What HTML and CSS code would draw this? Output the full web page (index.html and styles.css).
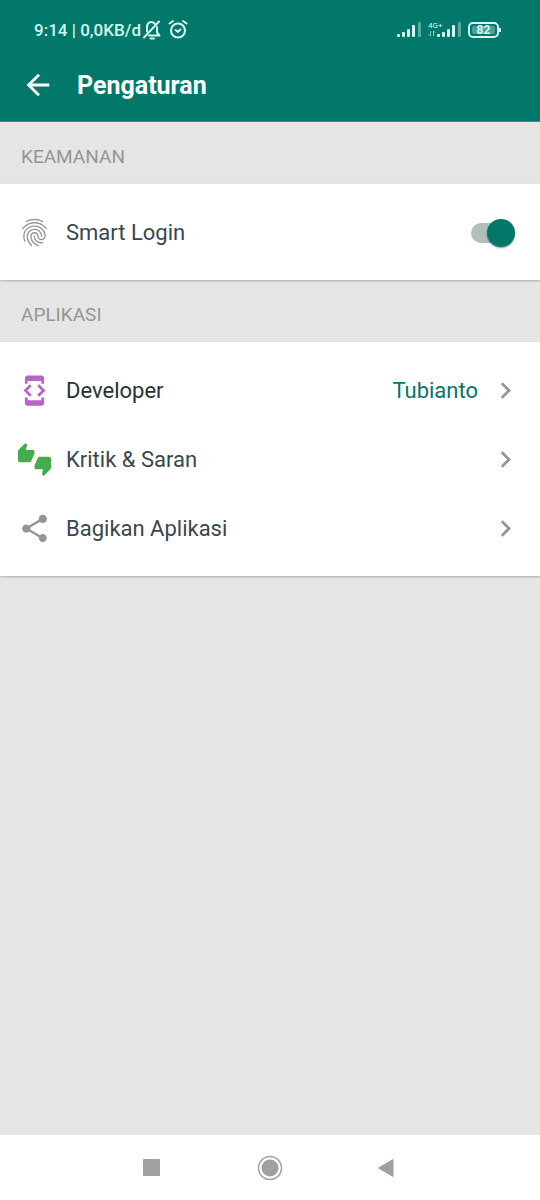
FILE: index.html
```html
<!DOCTYPE html>
<html lang="id">
<head>
<meta charset="utf-8">
<meta name="viewport" content="width=device-width, initial-scale=1">
<title>Pengaturan</title>
<link rel="stylesheet" href="styles.css">
</head>
<body>
<header class="top">
  <div class="status">
    <span class="status-text">9:14 | 0,0KB/d</span>
    <svg class="bell" viewBox="0 0 20 22" width="20" height="22" fill="none" stroke="currentColor" stroke-width="2" stroke-linecap="round" stroke-linejoin="round" aria-hidden="true">
      <path d="M2 18.500L17 2.500M12.500 4.500C11.500 3.300 10.500 3 9.500 3 6.500 3 5 5.500 5 8.500V12.500M15 8V13.500L17.500 16.500H7"/><path d="M8.500 19.500H12"/>
    </svg>
    <svg class="alarm" viewBox="0 0 20 22" width="20" height="22" fill="none" stroke="currentColor" stroke-width="2.100" stroke-linecap="round" stroke-linejoin="round" aria-hidden="true">
      <circle cx="10" cy="11.500" r="7"/><path d="M7.500 11L10 12.800 12.500 10.500M1.500 4.500L5 2M18.500 4.500L15 2"/>
    </svg>
    <span class="status-right">
      <svg class="signal" viewBox="0 0 24 16" width="24" height="16" fill="currentColor" aria-hidden="true">
        <rect x="0" y="12" width="3" height="3" rx="1"/><rect x="5" y="10" width="3" height="5" rx="1"/><rect x="10" y="7" width="3" height="8" rx="1"/><rect x="15" y="3" width="3" height="12" rx="1"/><rect x="21" y="0" width="3" height="15" rx="1" opacity=".4"/>
      </svg>
      <span class="net">
        <span class="net-label">4G+</span>
        <svg viewBox="0 0 8 7" width="8" height="7" fill="none" stroke="currentColor" opacity=".6" aria-hidden="true"><path d="M2.500 1V6L.5 4M5.500 6V1L7.500 3"/></svg>
      </span>
      <svg class="signal" viewBox="0 0 24 16" width="24" height="16" fill="currentColor" aria-hidden="true">
        <rect x="0" y="12" width="3" height="3" rx="1"/><rect x="5" y="10" width="3" height="5" rx="1"/><rect x="10" y="7" width="3" height="8" rx="1"/><rect x="15" y="3" width="3" height="12" rx="1"/><rect x="21" y="0" width="3" height="15" rx="1" opacity=".4"/>
      </svg>
      <span class="battery"><span class="battery-level">82</span></span>
    </span>
  </div>
  <div class="appbar">
    <button class="back" type="button" aria-label="Kembali">
      <svg viewBox="0 0 24 24" width="34" height="34" fill="currentColor" aria-hidden="true"><path d="M20 11H7.830l5.590-5.590L12 4l-8 8 8 8 1.410-1.410L7.830 13H20v-2z"/></svg>
    </button>
    <h1 class="title">Pengaturan</h1>
  </div>
</header>
<main class="content">
  <h2 class="section">KEAMANAN</h2>
  <div class="card">
    <label class="row" for="smart">
      <svg class="icon gray" viewBox="0 0 24 24" aria-hidden="true"><path d="M17.81 4.47c-.08 0-.16-.02-.23-.06C15.66 3.42 14 3 12.01 3c-1.98 0-3.86.47-5.57 1.41-.24.13-.54.04-.68-.2-.13-.24-.04-.55.2-.68C7.82 2.52 9.86 2 12.01 2c2.13 0 3.99.47 6.03 1.52.25.13.34.43.21.67-.09.18-.26.28-.44.28zM3.5 9.72c-.1 0-.2-.03-.29-.09-.23-.16-.28-.47-.12-.7.99-1.4 2.25-2.5 3.75-3.27C9.98 4.04 14 4.03 17.15 5.65c1.5.77 2.76 1.86 3.75 3.25.16.22.11.54-.12.7-.23.16-.54.11-.7-.12-.9-1.26-2.04-2.25-3.39-2.94-2.87-1.47-6.54-1.47-9.4.01-1.36.7-2.5 1.7-3.4 2.96-.08.14-.23.21-.39.21zm6.25 12.07c-.13 0-.26-.05-.35-.15-.87-.87-1.34-1.43-2.01-2.64-.69-1.23-1.05-2.73-1.05-4.34 0-2.97 2.54-5.39 5.66-5.39s5.66 2.42 5.66 5.39c0 .28-.22.5-.5.5s-.5-.22-.5-.5c0-2.42-2.09-4.39-4.66-4.39-2.57 0-4.66 1.97-4.66 4.39 0 1.44.32 2.77.93 3.85.64 1.15 1.08 1.64 1.85 2.42.19.2.19.51 0 .71-.11.1-.24.15-.37.15zm7.17-1.85c-1.19 0-2.24-.3-3.1-.89-1.49-1.01-2.38-2.65-2.38-4.39 0-.28.22-.5.5-.5s.5.22.5.5c0 1.41.72 2.74 1.94 3.56.71.48 1.54.71 2.54.71.24 0 .64-.03 1.04-.1.27-.05.53.13.58.41.05.27-.13.53-.41.58-.57.11-1.07.12-1.21.12zM14.91 22c-.04 0-.09-.01-.13-.02-1.59-.44-2.63-1.03-3.72-2.1-1.4-1.39-2.17-3.24-2.17-5.22 0-1.62 1.38-2.94 3.08-2.94 1.7 0 3.08 1.32 3.08 2.94 0 1.07.93 1.94 2.08 1.94s2.08-.87 2.08-1.94c0-3.77-3.25-6.83-7.25-6.83-2.84 0-5.44 1.58-6.61 4.03-.39.81-.59 1.76-.59 2.8 0 .78.07 2.01.67 3.61.1.26-.03.55-.29.64-.26.1-.55-.04-.64-.29-.49-1.31-.73-2.61-.73-3.96 0-1.2.23-2.29.68-3.24 1.33-2.79 4.28-4.6 7.51-4.6 4.55 0 8.25 3.51 8.25 7.83 0 1.62-1.38 2.94-3.08 2.94s-3.08-1.32-3.08-2.94c0-1.07-.93-1.94-2.08-1.94s-2.08.87-2.08 1.94c0 1.71.66 3.31 1.87 4.51.95.94 1.86 1.46 3.27 1.85.27.07.42.35.35.61-.05.23-.26.38-.47.38z"/></svg>
      <span class="name">Smart Login</span>
      <input class="switch" id="smart" type="checkbox" role="switch" checked>
    </label>
  </div>
  <h2 class="section">APLIKASI</h2>
  <div class="card">
    <button class="row" type="button">
      <svg class="icon purple" viewBox="0 0 24 24" aria-hidden="true"><path d="M7 5h10v2h2V3c0-1.1-.9-1.99-2-1.99L7 1c-1.1 0-2 .9-2 2v4h2V5zm8.41 11.59L20 12l-4.59-4.59L14 8.83 17.17 12 14 15.17l1.41 1.42zM10 15.17L6.83 12 10 8.83 8.59 7.41 4 12l4.59 4.59L10 15.17zM17 19H7v-2H5v4c0 1.1.9 2 2 2h10c1.1 0 2-.9 2-2v-4h-2v2z"/></svg>
      <span class="name dark">Developer</span>
      <span class="value">Tubianto</span>
      <svg class="icon gray" viewBox="0 0 24 24" aria-hidden="true"><path d="M10 6L8.590 7.410 13.170 12l-4.580 4.590L10 18l6-6z"/></svg>
    </button>
    <button class="row" type="button">
      <svg class="icon green" viewBox="0 0 24 24" aria-hidden="true"><path d="M12 6c0-.55-.45-1-1-1H5.82l.66-3.18.02-.23c0-.31-.13-.59-.33-.8L5.38 0 .44 4.94C.17 5.21 0 5.59 0 6v6.5c0 .83.67 1.5 1.5 1.5h6.75c.62 0 1.15-.38 1.38-.91l2.26-5.29c.07-.17.11-.36.11-.55V6zm10.5 4h-6.75c-.62 0-1.15.38-1.38.91l-2.26 5.29c-.07.17-.11.36-.11.55V18c0 .55.45 1 1 1h5.18l-.66 3.18-.02.24c0 .31.13.59.33.8l.79.78 4.94-4.94c.27-.27.44-.65.44-1.06v-6.5c0-.83-.67-1.5-1.5-1.5z"/></svg>
      <span class="name">Kritik &amp; Saran</span>
      <svg class="icon gray" viewBox="0 0 24 24" aria-hidden="true"><path d="M10 6L8.590 7.410 13.170 12l-4.580 4.590L10 18l6-6z"/></svg>
    </button>
    <button class="row" type="button">
      <svg class="icon gray" viewBox="0 0 24 24" aria-hidden="true"><path d="M18 16.08c-.76 0-1.44.3-1.96.77L8.91 12.7c.05-.23.09-.46.09-.7s-.04-.47-.09-.7l7.05-4.11c.54.5 1.25.81 2.04.81 1.66 0 3-1.34 3-3s-1.34-3-3-3-3 1.34-3 3c0 .24.04.47.09.7L8.04 9.81C7.5 9.31 6.79 9 6 9c-1.66 0-3 1.34-3 3s1.34 3 3 3c.79 0 1.5-.31 2.04-.81l7.12 4.16c-.05.21-.08.43-.08.65 0 1.61 1.31 2.92 2.92 2.92 1.61 0 2.92-1.31 2.92-2.92s-1.31-2.92-2.92-2.92z"/></svg>
      <span class="name">Bagikan Aplikasi</span>
      <svg class="icon gray" viewBox="0 0 24 24" aria-hidden="true"><path d="M10 6L8.590 7.410 13.170 12l-4.580 4.590L10 18l6-6z"/></svg>
    </button>
  </div>
</main>
<nav class="nav" aria-label="Navigasi sistem">
  <button class="nav-button" type="button" aria-label="Aplikasi terbaru"><svg viewBox="0 0 26 26" width="26" height="26" aria-hidden="true"><rect x="4" y="4" width="17" height="17" rx="1" fill="currentColor"/></svg></button>
  <button class="nav-button" type="button" aria-label="Beranda"><svg viewBox="0 0 26 26" width="26" height="26" aria-hidden="true"><circle cx="13" cy="13" r="11.500" fill="none" stroke="currentColor" stroke-width="1.500"/><circle cx="13" cy="13" r="8.500" fill="currentColor"/></svg></button>
  <button class="nav-button" type="button" aria-label="Kembali ke layar sebelumnya"><svg viewBox="0 0 26 26" width="26" height="26" aria-hidden="true"><path d="M3.500 13L18 4.500V21.500Z" fill="currentColor" stroke="currentColor" stroke-linejoin="round"/></svg></button>
</nav>
</body>
</html>
```
FILE: styles.css
```css
* { box-sizing: border-box; }

body {
  margin: 0;
  min-height: 100vh;
  display: flex;
  flex-direction: column;
  background: #e5e5e5;
  font-family: Roboto, "Liberation Sans", sans-serif;
}

button {
  margin: 0;
  padding: 0;
  border: 0;
  background: none;
  font: inherit;
  color: inherit;
  cursor: pointer;
}

svg { display: block; flex: none; }

.top {
  background: #01786a;
  color: #fff;
  border-bottom: 1px solid #3f8f85;
}

.status {
  display: flex;
  align-items: center;
  height: 60px;
  padding: 0 41px 0 34px;
  color: #d4f7ef;
}

.status-text {
  font-size: 17px;
  font-weight: 500;
  line-height: 20px;
}

.bell { margin-left: 1px; }
.alarm { margin-left: 6px; }

.status-right {
  display: flex;
  align-items: center;
  margin-left: auto;
}

.net {
  display: flex;
  flex-direction: column;
  width: 15px;
  margin-left: 7px;
  margin-right: -6px;
  padding-bottom: 3px;
}

.net-label {
  font-size: 8px;
  line-height: 9px;
}

.battery {
  position: relative;
  margin-left: 7px;
  padding: 2px;
  border: 2px solid currentColor;
  border-radius: 5px;
}

.battery::after {
  content: "";
  position: absolute;
  top: 4px;
  right: -4px;
  width: 2px;
  height: 4px;
  background: currentColor;
}

.battery-level {
  display: block;
  width: 23px;
  background: #4fa396;
  border-radius: 2px;
  font-size: 12px;
  font-weight: 700;
  line-height: 8px;
  text-align: center;
}

.appbar {
  display: flex;
  align-items: center;
  gap: 22px;
  padding: 6px 21px 18px;
}

.title {
  margin: 0;
  padding-top: 3px;
  font-size: 25px;
  font-weight: 700;
  line-height: 34px;
}

.content { flex: 1; }

.section {
  margin: 0;
  padding: 23px 21px 15px;
  color: #969696;
  font-size: 19px;
  font-weight: 400;
  line-height: 24px;
}

.card {
  padding: 14px 0 13px;
  background: #fff;
  box-shadow: 0 1px 2px rgba(0, 0, 0, 0.25);
}

.row {
  display: flex;
  align-items: center;
  width: 100%;
  height: 69px;
  padding: 0 18px;
  text-align: left;
}

.icon {
  width: 33px;
  height: 33px;
  fill: currentColor;
}

.gray { color: #959595; }
.purple { color: #b565c4; }
.green { color: #43ad4b; }

.name,
.value {
  padding-top: 1px;
  font-size: 22px;
  line-height: 28px;
}

.name {
  flex: 1;
  margin-left: 15px;
  color: #37474f;
}

.dark { color: #263238; }

.value {
  margin-right: 11px;
  color: #01786a;
}

.switch {
  appearance: none;
  position: relative;
  width: 44px;
  height: 28px;
  margin: 0 7px 0 0;
}

.switch::before {
  content: "";
  position: absolute;
  inset: 4px 4px 4px 0;
  border-radius: 10px;
  background: #b0bfbb;
}

.switch::after {
  content: "";
  position: absolute;
  top: 0;
  left: 0;
  width: 28px;
  height: 28px;
  border-radius: 50%;
  background: #eee;
  box-shadow: 0 1px 2px rgba(0, 0, 0, 0.4);
}

.switch:checked::after {
  left: 16px;
  background: #01786a;
}

.nav {
  display: flex;
  justify-content: center;
  gap: 92px;
  padding: 20px 0 19px;
  background: #fff;
  color: #a0a0a0;
}
```
